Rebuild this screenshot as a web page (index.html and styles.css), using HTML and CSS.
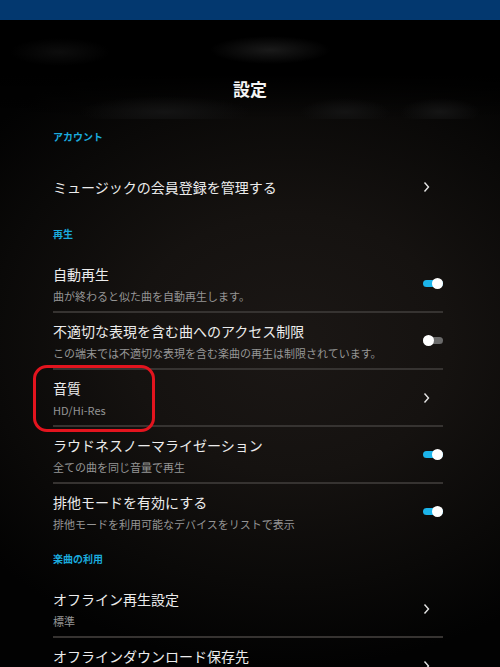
FILE: index.html
```html
<!DOCTYPE html>
<html lang="ja">
<head>
    <meta charset="UTF-8">
    <meta name="viewport" content="width=device-width, initial-scale=1.0">
    <title>設定</title>
    <link rel="stylesheet" href="styles.css">
</head>

<body>
    <!-- Window top bar -->
    <div class="topbar"></div>

    <div class="screen">
        <div class="header">
            <h1>設定</h1>
        </div>

        <div class="settings">
            <!-- Account -->
            <div class="section">
                <div class="section-label">アカウント</div>
                <div class="row">
                    <div class="row-text">
                        <div class="row-title">ミュージックの会員登録を管理する</div>
                    </div>
                    <span class="chevron"><svg width="20" height="12" viewBox="0 0 20 12"><path d="M1.5 1.5 L5.5 6 L1.5 10.5" fill="none" stroke="#e6e6e6" stroke-width="1.4"/></svg></span>
                </div>
            </div>

            <!-- Playback -->
            <div class="section">
                <div class="section-label">再生</div>
                <div class="row">
                    <div class="row-text">
                        <div class="row-title">自動再生</div>
                        <div class="row-sub">曲が終わると似た曲を自動再生します。</div>
                    </div>
                    <span class="toggle on"><span class="knob"></span></span>
                </div>
                <div class="row">
                    <div class="row-text">
                        <div class="row-title">不適切な表現を含む曲へのアクセス制限</div>
                        <div class="row-sub">この端末では不適切な表現を含む楽曲の再生は制限されています。</div>
                    </div>
                    <span class="toggle"><span class="knob"></span></span>
                </div>
                <div class="row">
                    <div class="row-text">
                        <div class="row-title">音質</div>
                        <div class="row-sub">HD/Hi-Res</div>
                    </div>
                    <span class="chevron"><svg width="20" height="12" viewBox="0 0 20 12"><path d="M1.5 1.5 L5.5 6 L1.5 10.5" fill="none" stroke="#e6e6e6" stroke-width="1.4"/></svg></span>
                    <span class="mark"></span>
                </div>
                <div class="row">
                    <div class="row-text">
                        <div class="row-title">ラウドネスノーマライゼーション</div>
                        <div class="row-sub">全ての曲を同じ音量で再生</div>
                    </div>
                    <span class="toggle on"><span class="knob"></span></span>
                </div>
                <div class="row">
                    <div class="row-text">
                        <div class="row-title">排他モードを有効にする</div>
                        <div class="row-sub">排他モードを利用可能なデバイスをリストで表示</div>
                    </div>
                    <span class="toggle on"><span class="knob"></span></span>
                </div>
            </div>

            <!-- Music usage -->
            <div class="section">
                <div class="section-label">楽曲の利用</div>
                <div class="row">
                    <div class="row-text">
                        <div class="row-title">オフライン再生設定</div>
                        <div class="row-sub">標準</div>
                    </div>
                    <span class="chevron"><svg width="20" height="12" viewBox="0 0 20 12"><path d="M1.5 1.5 L5.5 6 L1.5 10.5" fill="none" stroke="#e6e6e6" stroke-width="1.4"/></svg></span>
                </div>
                <div class="row row-top">
                    <div class="row-text">
                        <div class="row-title">オフラインダウンロード保存先</div>
                    </div>
                    <span class="chevron"><svg width="20" height="12" viewBox="0 0 20 12"><path d="M1.5 1.5 L5.5 6 L1.5 10.5" fill="none" stroke="#e6e6e6" stroke-width="1.4"/></svg></span>
                </div>
            </div>
        </div>
    </div>
</body>
</html>
```

FILE: styles.css
```css
html, body {
    margin: 0;
    padding: 0;
    height: 667px;
    overflow: hidden;
    background-color: #000;
}
body {
    font-family: "Noto Sans CJK JP", "Noto Sans", sans-serif;
    color: #ececec;
}
.topbar {
    height: 20px;
    background-color: #03386f;
}
.screen {
    height: 647px;
    overflow: hidden;
    background:
        radial-gradient(ellipse 80% 50% at 58% 50%, #1b1715 0%, #151210 40%, #0a0908 75%, #020202 100%),
        #000;
}
.header {
    height: 99px;
    box-sizing: border-box;
    padding-top: 59px;
    background:
        radial-gradient(ellipse 60px 14px at 270px 30px, #1a1a1a, rgba(0, 0, 0, 0)),
        radial-gradient(ellipse 50px 14px at 60px 32px, #0d0d0d, rgba(0, 0, 0, 0)),
        radial-gradient(ellipse 85px 16px at 165px 92px, #141414, rgba(0, 0, 0, 0)),
        radial-gradient(ellipse 45px 14px at 345px 92px, #141414, rgba(0, 0, 0, 0)),
        radial-gradient(ellipse 40px 14px at 440px 92px, #151515, rgba(0, 0, 0, 0)),
        linear-gradient(to bottom, #000 0%, #000 55%, rgba(0, 0, 0, 0) 100%);
}
.header h1 {
    margin: 0;
    font-size: 17px;
    line-height: 20px;
    font-weight: bold;
    text-align: center;
    color: #f4f4f4;
}
.settings {
    padding: 0 57px 0 53px;
}
.section-label {
    height: 40px;
    box-sizing: border-box;
    padding-top: 10px;
    font-size: 10px;
    line-height: 16px;
    font-weight: bold;
    color: #1aaadd;
}
.row {
    position: relative;
    display: flex;
    align-items: center;
    height: 57px;
    box-sizing: border-box;
    border-bottom: 2px solid #363331;
}
.row:last-child {
    border-bottom-color: transparent;
}
.row-top .row-text {
    align-self: flex-start;
    padding-top: 8px;
}
.row-text {
    flex: 1;
    min-width: 0;
}
.row-title {
    font-size: 14px;
    line-height: 20px;
    white-space: nowrap;
}
.row-sub {
    margin-top: 4px;
    font-size: 11px;
    line-height: 16px;
    color: #959595;
    white-space: nowrap;
}
.chevron {
    display: flex;
    width: 20px;
}
.toggle {
    display: flex;
    align-items: center;
    width: 20px;
    height: 7px;
    border-radius: 4px;
    background-color: #6a6a6a;
}
.toggle .knob {
    width: 11px;
    height: 11px;
    border-radius: 50%;
    background-color: #fff;
}
.toggle.on {
    justify-content: flex-end;
    background-color: #1cb4ea;
}
/* red annotation around the sound quality row */
.mark {
    position: absolute;
    left: -20px;
    top: -5px;
    width: 122px;
    height: 67px;
    box-sizing: border-box;
    border: 3px solid #e3141e;
    border-radius: 14px;
}
```
